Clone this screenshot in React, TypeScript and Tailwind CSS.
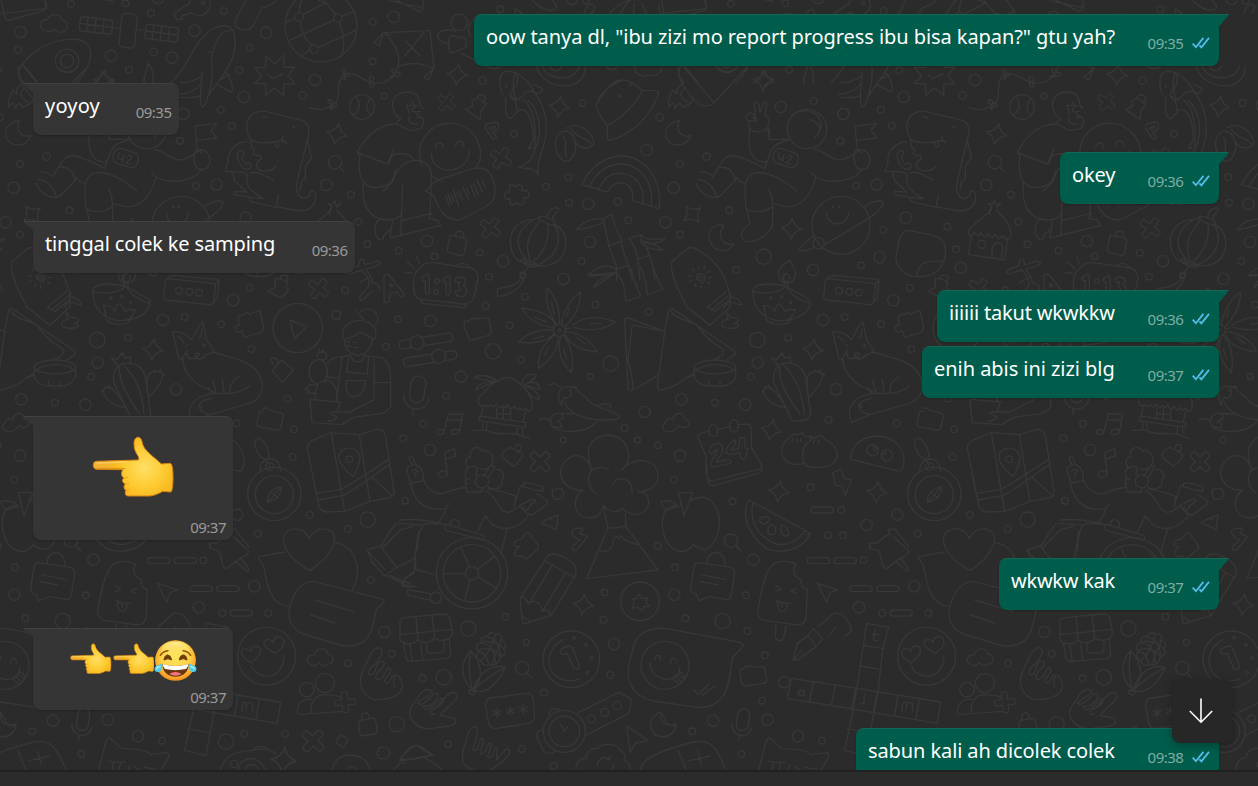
import React from 'react';

type Dot = [number, number, number];

function Dots({ items }: { items: Dot[] }) {
  return (
    <>
      {items.map(([x, y, r], i) => (
        <circle key={i} cx={x} cy={y} r={r} />
      ))}
    </>
  );
}

/** Doodle coordinates are in thirds of a pixel, relative to the block's corner. */
function Block({ x, y, children }: { x: number; y: number; children: React.ReactNode }) {
  return <g transform={`translate(${x} ${y}) scale(0.33333)`}>{children}</g>;
}

function Sparkle({ x, y, r = 31, a = 8 }: { x: number; y: number; r?: number; a?: number }) {
  return (
    <path
      transform={`translate(${x} ${y}) rotate(${a}) scale(${r / 31})`}
      d="M0-32Q5-9 31 0Q7 5 0 32Q-7 8-31 0Q-7-6 0-32Z"
    />
  );
}

function Cross({ x, y, a = 45, s = 1 }: { x: number; y: number; a?: number; s?: number }) {
  return (
    <path
      transform={`translate(${x} ${y}) rotate(${a}) scale(${s})`}
      d="M-10-31Q-10-36-4-36H4Q10-36 10-31V-10H31Q36-10 36-4V4Q36 10 31 10H10V31Q10 36 4 36H-4Q-10 36-10 31V10H-31Q-36 10-36 4V-4Q-36-10-31-10H-10Z"
    />
  );
}

function Doodles() {
  return (
    <>
      <Block x={0} y={0}>
        <Dots items={[[213, 11, 10], [376, 10, 10], [453, 39, 10], [62, 96, 17], [54, 149, 10], [333, 167, 17], [461, 156, 11], [516, 173, 17], [387, 209, 10], [584, 92, 17], [671, 33, 10], [798, 98, 17], [749, 143, 10], [718, 211, 10], [945, 240, 17], [908, 286, 11], [731, 291, 17], [662, 329, 10], [550, 342, 17], [695, 378, 10], [540, 422, 10], [140, 470, 11], [60, 492, 10], [41, 563, 17], [588, 557, 10], [650, 554, 17], [208, 631, 10], [16, 667, 17], [60, 704, 10], [1118, 66, 10], [1181, 51, 17], [1118, 184, 10], [1153, 288, 9], [979, 555, 17], [1053, 584, 10], [737, 653, 17], [1075, 665, 10], [1102, 733, 10], [1196, 752, 10], [475, -6, 17]]} />
        <path d="M3-5L14 52Q18 63 30 60L130 32Q142 27 139 18L130-8M290-6L340 4" />
        <path d="M130 88C114 80 122 56 142 60C148 40 180 36 186 60C206 64 206 92 190 94C180 100 172 96 166 88C158 96 140 96 130 88Z" />
        <g transform="translate(288 76) rotate(7)">
          <rect x="-49" y="-21" width="98" height="43" rx="8" />
          <path d="M-49 0H49M-26-21V22M-2-21V22M22-21V22" />
        </g>
        <path d="M337 82L362 86M412 89L436 92" />
        <rect x="-24" y="-51" width="47" height="102" rx="12" transform="translate(385 92) rotate(6)" />
        <g transform="translate(485 99) rotate(7)">
          <rect x="-49" y="-21" width="98" height="43" rx="8" />
          <path d="M-49 0H49M-26-21V22M-2-21V22M22-21V22" />
        </g>
        <path d="M68 192C100 150 150 122 210 118C250 116 272 130 272 164C270 200 250 226 228 250M68 192C50 214 52 226 72 248M68 192L112 246" />
        <circle cx="201" cy="183" r="35" /><circle cx="201" cy="183" r="20" />
        <path d="M70 250C50 260 48 272 52 282C42 278 36 268 38 270C26 292 22 310 28 322C34 306 46 304 44 326C56 306 66 306 66 322C80 320 98 308 101 294M75 262C56 280 60 296 84 306" />
        <path d="M306 212Q312 232 342 238Q318 246 312 262M306 212Q306 238 280 250M433 250C426 226 444 222 442 190C462 206 462 230 458 250" />
        <path d="M522 46L526 38L568 10L572-4M522 46L532 60L548 56L546 48L572 38L590 46L606 48L628 30Q634 14 626-4" />
        <circle cx="609" cy="9" r="5" />
        <path d="M740-4L708 58C700 78 710 82 720 86C744 94 754 86 760 76L786 24C808 18 820 12 832-2" />
        <path d="M513 248C562 206 578 140 610 110C640 78 680 66 698 90C712 120 706 160 690 190C672 230 640 262 623 292C616 320 606 330 602 310C600 270 606 236 606 216M634 176C644 130 660 86 692 92M634 176C640 220 636 258 623 292M536 282C564 282 588 270 604 250M538 292C560 294 586 292 602 288M678 220C694 236 702 268 694 276C682 270 660 260 650 252M667 236L690 222M540 248C560 250 590 240 606 228" />
        <circle cx="630" cy="156" r="2" />
        <path d="M764 203L797 203L798 168L824 192L850 166L853 202L885 201L864 226L885 252L852 252L851 286L823 264L798 286L797 252L764 250L785 228ZM806 225L818 236L848 222" />
        <circle cx="963" cy="78" r="108" /><circle cx="897" cy="50" r="13" /><circle cx="1014" cy="54" r="13" /><circle cx="942" cy="147" r="13" />
        <path d="M857 68L884 54M909 43L980 8M900 63C904 96 920 124 936 136M898 37C898 20 902 4 910-6M867 122L1002 60M1026 48L1062 34M955 143L1069 90M930 150L904 168M1018 67C1034 110 1036 144 1022 172M1006 42L966-6M940-6L972 8M990-6L998-2" />
        <path d="M1150 98L1122 128L1138 138ZM1150 98L1174 106M1150 98L1290 92L1302 204M1150 98C1180 120 1204 160 1194 200M1194 200C1230 184 1270 190 1300 206M1214 168L1272 98M1216 122L1260 168M1302 204L1272 232L1286 240L1300 206M1194 200L1186 220" />
        <path d="M928 323C960 336 990 324 1006 310C1024 290 1006 246 1030 226C1060 210 1084 236 1112 248C1150 254 1168 242 1184 222" />
        <path d="M1034 224q-14-16-4-16q12 4 6 14q18-6 14 4q-8 8-16 0q4 16-2 12zM1112 246q-10-14 2-16q14 2 2 16q12 16 0 16q-12-4-4-16zM1184 222q-16-12-4-16q12 4 6 12q18-4 14 6q-6 8-16 2q-4 12-14 4zM994 314q-16-8-8-14q14 0 12 10q14-2 12 8q-6 6-14 0q2 12-4 10z" />
        <circle cx="1086" cy="321" r="37" /><path d="M1068 290C1082 310 1080 330 1060 346M1112 296C1098 310 1096 330 1114 348" />
        <path d="M58 362C28 366 12 386 18 410C28 440 76 448 94 406C68 416 44 394 58 362Z" />
        <Sparkle x={1010} y={402} a={12} />
        <circle cx="1005" cy="487" r="20" /><path d="M1018 500L1032 515" />
        <path d="M585 378L650 370L633 392L650 414L590 422M585 378L592 450M592 450C580 456 580 474 584 486C584 506 606 514 620 504C634 490 632 470 620 456C608 446 598 450 592 450L606 458" />
        <path d="M1186 372C1130 372 1090 420 1072 458L1162 492L1168 482M1072 458L1080 466M1190 372L1230 392L1262 386C1276 364 1272 350 1254 348L1250 340M1186 372L1202 356C1170 340 1170 290 1200 280C1230 270 1256 280 1258 306C1262 316 1260 326 1270 324M1150 574L1180 542C1186 514 1206 484 1244 482C1276 478 1296 500 1294 530L1290 640M1168 492C1170 470 1180 458 1200 462C1216 458 1236 468 1244 482M1182 446L1162 492M1080 466C1070 530 1090 564 1130 562C1166 562 1184 540 1186 512M1090 550C1086 600 1096 656 1160 660C1180 660 1194 654 1202 646M1208 556L1202 706M1138 658C1124 670 1120 700 1134 714C1142 726 1152 718 1150 708C1160 696 1172 690 1174 684M1178 660L1170 714M1170 714L1322 676L1310 660L1286 656L1294 640L1204 662" />
        <path d="M1254 316C1240 320 1232 330 1240 336L1260 334M1228 340L1220 316L1244 316L1236 304M1228 350C1222 366 1234 374 1254 372M1250 354L1262 352" />
      </Block>

      <Block x={40} y={60}>
        <Dots items={[[782, 623, 17], [768, 568, 10], [742, 500, 10], [550, 510, 10], [538, 592, 17], [483, 616, 10], [339, 630, 17], [109, 629, 10], [191, 590, 23], [88, 451, 10], [341, 123, 10], [430, 162, 17], [421, 243, 10], [629, 683, 10], [242, 141, 17]]} />
        <circle cx="321" cy="207" r="59" />
        <path d="M272 172C290 148 320 150 340 158C370 176 370 210 344 232M330 178C346 184 358 196 359 208M208 204V238H268L232 252C212 262 208 290 194 326L166 310C130 296 110 284 90 288C66 292 60 320 38 350C30 340 14 334 4 336M149 210C142 260 150 306 194 306M194 306L202 302M202 208L208 226M344 268C370 270 390 300 420 300C446 298 462 280 476 274M334 338C360 370 420 372 470 346L484 328M348 352C334 400 310 440 262 440C244 440 230 432 217 430M290 394C250 356 190 326 154 342C130 360 134 400 138 440L150 490C136 500 122 512 124 530C130 550 160 550 190 530C216 506 218 500 218 486V438C216 410 214 396 204 386M138 448C160 458 196 458 216 440M60 322C90 320 104 340 104 364L110 352L118 364L134 370M104 362L60 408C30 420 0 400-12 370M-8 358C10 358 40 372 50 412" />
        <rect x="-38" y="-23" width="76" height="46" rx="18" transform="translate(257 294) rotate(18)" />
        <path d="M238 278L234 294L250 300M252 284L246 306M260 294Q270 280 276 290Q274 300 256 308L270 312" />
        <path d="M150 208C138 190 152 178 164 184C170 172 160 166 166 158L162 132Q168 120 176 130L180 156L190 130C196 120 204 126 198 140L196 166C208 170 210 190 202 204C190 218 160 218 150 208ZM164 186C170 184 172 176 166 172M150 182C134 184 136 166 146 160C160 156 166 166 160 176" />
        <circle cx="423" cy="496" r="87" />
        <path d="M380 458C378 500 440 506 446 458M492 440C520 424 544 418 550 428C546 452 518 470 374 554M340 528C310 550 292 568 298 572C316 574 330 568 342 562" />
        <circle cx="356" cy="550" r="17" /><circle cx="400" cy="442" r="2" /><circle cx="417" cy="440" r="2" />
        <Sparkle x={275} y={506} a={4} />
        <path d="M632 238C618 214 614 190 632 168C650 152 670 150 690 158L776 178C800 182 810 196 806 222C796 270 778 330 770 372C766 394 776 412 790 416C804 414 812 404 812 392C824 388 830 404 826 420C820 450 790 456 760 450L708 440M632 238C650 254 700 250 728 240L738 250M728 226L726 244L738 244M704 250C708 268 716 264 716 248M670 172Q678 168 682 174M632 240L634 260L644 268L640 282L650 288L660 284L664 296L654 304C640 322 660 336 680 332C696 332 704 324 708 318M620 246C590 244 562 272 564 304L556 334L604 336C620 338 626 346 620 358C618 380 640 400 670 416L628 412L632 424L708 442L716 404M578 340L584 362L620 396L584 394C574 408 600 406 630 412M630 340C650 330 670 346 700 360M802 240L814 292L806 308L802 306L796 322V356L784 366L780 390" />
        <circle cx="761" cy="202" r="2" />
        <path d="M600 272C580 278 600 326 620 328C640 326 634 312 624 308L616 314C608 304 604 296 606 288L612 284C612 276 606 270 600 272Z" />
        <path d="M876 442L864 430L876 434L884 422L888 436L902 430L890 444M876 442C866 450 864 460 872 464M874 450L808 506L806 522C812 530 820 526 822 516C828 528 840 530 842 518C850 532 860 534 862 520C872 534 882 536 884 522C894 538 904 540 906 526C916 540 932 542 934 522C930 490 912 470 890 452M814 526L806 584L914 600L922 540M876 594V568C880 542 906 544 908 566L904 598" />
        <circle cx="845" cy="553" r="12" />
        <path d="M630 512L700 526C730 534 738 556 736 582C732 626 700 650 660 650C610 650 586 620 588 590L598 540C606 512 618 510 630 512ZM650 650C656 610 670 600 726 604" />
        <path d="M164 682C190 664 250 674 270 686L330 720C336 750 300 780 244 782C190 782 160 740 160 706C156 686 162 680 164 682ZM162 694C200 706 250 694 258 676M262 686C280 710 310 728 330 728M196 776C210 796 260 800 272 780M198 768L190 736C208 736 220 740 224 754C226 740 236 730 240 732C250 740 252 748 254 754C262 748 276 748 286 750C280 766 270 778 260 780" />
        <circle cx="258" cy="653" r="12" />
        <path d="M244 665C230 650 230 620 270 602C278 620 292 634 284 654C280 666 260 674 244 665M258 640C250 650 246 662 256 666M252 670V682M264 670V682" />
        <circle cx="213" cy="714" r="3" /><circle cx="245" cy="709" r="3" /><circle cx="272" cy="727" r="3" />
        <path d="M382 656L520 670Q528 672 526 682L520 728Q516 736 508 734L380 720Q370 718 371 708L376 664Q378 656 382 656ZM380 656L398 646L530 658Q538 660 537 668L531 716L514 734M526 672L537 660" />
        <circle cx="417" cy="692" r="10" /><circle cx="448" cy="695" r="10" /><circle cx="477" cy="698" r="10" />
        <path d="M722 656L744 668L738 682L746 690L724 714L684 694L706 682L706 656ZM720 658C716 644 740 640 744 652C744 664 738 668 736 668" />
        <Cross x={836} y={686} a={36} s={0.9} />
        <path d="M920 638Q920 630 928 628L956 618L960 600Q966 594 972 602L974 614L1010 604Q1020 602 1022 610L1004 620L978 628L992 650L998 668Q1018 672 1020 690M920 638Q926 644 932 640L966 630L984 654L958 668M1032 726V648Q1040 636 1050 648L1092 702Q1090 714 1082 710L1070 694L1050 700L1048 722Q1040 730 1032 726ZM1050 670V680L1060 678ZM984 654L988 676L958 712Q960 724 970 718L998 692" />
        <path d="M1130 590L1139 610M1102 606L1122 624M1096 638L1116 639" />
      </Block>

      <Block x={400} y={0}>
        <Dots items={[[301, 28, 10], [178, 67, 25], [248, 242, 11], [548, 309, 10], [779, 352, 11], [342, 402, 10], [740, 450, 17], [505, 532, 10], [437, 560, 10], [507, 608, 10], [565, 612, 17], [653, 605, 11], [685, 661, 10], [81, 723, 17], [104, 769, 10], [239, 758, 10], [309, 784, 17], [570, 726, 17], [544, 783, 10], [515, -3, 17], [558, 2, 10], [635, 192, 17]]} />
        <path d="M-20-4L58 34C72 32 70 14 68-4M-30 2L64 22M396-4C410 20 440 36 466 28C476 18 460 4 450-4M346 42V26L366 40M552 42C556 18 574 6 582 16C586 28 580 36 572 42M628 42C660 2 690-4 720 0M780 42L776 14M786 40L916 26Q922 20 920 12L912-4M660 42L690-4M700 42L704 8M724 8L740 42" />
        <path d="M212 110C190 80 226 40 250 60M166 94C140 86 116 90 112 110C116 126 136 130 148 132M148 132C136 110 166 98 174 116C186 104 204 114 198 134L200 140L156 160C146 150 144 140 148 132M184 160L232 184M262 200Q280 210 300 202" />
        <Sparkle x={172} y={224} a={6} /><Sparkle x={478} y={320} a={8} />
        <Cross x={139} y={306} a={37} s={0.78} /><Cross x={303} y={474} a={33} s={0.92} /><Cross x={271} y={684} a={36} s={0.92} />
        <path d="M232 294L260 310L244 330L240 358L196 328L218 318L216 302ZM232 294C230 284 250 278 256 294C256 304 252 308 248 310" />
        <path d="M308 284C294 250 296 216 322 214C356 212 390 250 402 274C436 320 450 380 430 440C420 470 412 490 414 522C400 500 372 506 356 502C390 490 404 470 404 440M350 330C350 310 344 296 336 290M318 292C314 320 318 356 330 356C342 352 350 336 356 330C390 320 400 380 400 420C380 450 384 450 396 442M350 226C366 260 310 280 340 298C370 306 360 270 400 274M346 220C336 240 338 280 350 300M402 254C420 260 432 270 426 272C416 284 408 280 400 276M370 300C400 320 410 380 404 440M384 302C420 330 430 400 404 450" />
        <circle cx="318" cy="259" r="2" />
        <path d="M410 200C420 240 460 262 510 256C540 250 556 226 556 200M428 200C440 240 520 250 538 200M450 200C458 216 476 216 484 200M706 200C700 224 730 234 744 224C760 232 780 224 786 204" />
        <path d="M592 310C600 290 630 254 652 242C676 234 700 246 727 272L770 272Q778 276 774 286C750 350 700 400 630 422Q622 420 622 408V376C604 356 584 320 590 310ZM592 310C600 270 650 250 666 240M622 376C660 360 710 310 727 272" />
        <circle cx="658" cy="287" r="4" /><circle cx="692" cy="252" r="4" />
        <path d="M835 200C832 240 860 280 900 314C920 322 936 316 944 306L1042 200M850 200L942 308M950 200C970 220 1000 220 1012 200" />
        <path d="M258 380Q254 374 262 372L284 366C300 366 300 388 284 396L278 398L290 410Q286 420 276 414L256 384M268 384L284 378C290 384 282 390 276 390Z" />
        <path d="M500 384C522 370 570 376 582 428C576 450 536 450 526 424M494 394C520 390 530 430 526 450C516 490 490 496 472 460C462 430 466 396 494 394ZM490 410C506 430 488 450 500 470M514 388C530 416 560 410 578 436" />
        <path d="M66 498C40 420 96 366 156 370C216 374 250 430 240 480C238 490 234 494 228 500M94 460C94 530 206 526 208 452M107 444C108 424 130 424 130 444M167 438C168 418 190 418 191 438M94 528L128 546" />
        <path d="M112 540L76 572L100 586C120 640 140 660 180 660L260 618C290 600 290 570 278 536C264 500 240 500 210 508Z" />
        <path d="M137 586L148 618M143 580L156 612M154 584L162 604M160 570L176 618M170 576L178 596M178 574L188 600M190 562L206 602M200 564L208 584M212 556L226 592M220 550L236 586M232 542L248 576M246 540L256 562" />
        <path d="M330 554Q340 552 344 560Q356 550 366 558Q370 566 364 572Q388 570 388 582Q384 598 372 592Q376 606 368 614Q358 618 350 606Q342 618 330 612L330 596Q316 602 314 590Q312 574 328 576Z" />
        <path d="M545 554C570 500 620 466 670 468C740 474 786 540 778 626L698 602M545 554L622 576C640 540 690 536 698 584V602M568 560C590 510 630 490 670 492C724 496 762 550 754 618M596 568C612 530 640 518 666 520C706 524 736 560 728 610" />
        <path d="M150 708Q150 704 156 706L192 714Q202 718 200 726L192 762Q188 768 180 766L150 758Q140 756 142 748ZM168 706C164 690 190 690 191 704L190 714" />
        <path d="M420 654Q410 656 400 658C350 660 326 700 332 734C336 770 350 784 370 786C420 806 460 798 480 778C510 740 500 690 462 672M418 650Q430 646 462 662Q468 670 460 676Q440 672 420 660ZM444 654C440 630 466 618 476 626C476 640 458 640 458 656M400 660C344 690 344 740 378 776M418 664C380 710 376 740 390 782M444 672C450 720 430 760 400 784M464 676C490 720 470 770 414 794M362 780Q366 772 380 782L410 792Q412 800 406 802Q380 802 362 780ZM386 800L368 822" />
        <circle cx="368" cy="827" r="8" />
        <path d="M530 690C550 664 570 656 612 656L636 642C640 680 660 706 666 724C660 750 690 790 696 840M530 690C560 686 600 674 612 666L606 656M612 666L626 734L650 800V840M626 738L664 724M650 808L686 796M686 716L724 704C730 720 760 720 794 716C780 730 750 734 730 728M686 716C700 730 712 750 716 800L720 840M724 706C712 730 740 750 786 750C770 730 740 730 726 720M716 776L748 766M740 740C744 760 760 780 764 840M564 826C590 800 620 790 648 806M568 828L640 824" />
        <Sparkle x={877} y={643} r={31} a={52} /><Sparkle x={1092} y={242} a={6} />
        <path d="M960 674C930 678 922 700 930 722C940 760 990 760 1000 732C970 738 946 710 972 676Z" />
        <path d="M822 780L862 746Q870 740 882 744C920 760 950 790 972 830L990 880M822 780C806 790 818 820 826 850L860 920L930 976M930 976L990 920L990 880" />
        <path d="M898 834C896 828 906 826 908 834C908 844 892 844 890 834C888 820 908 816 914 828C918 840 910 850 900 850" />
        <path d="M866 826L874 829M876 806L882 812M895 798L896 806M914 800L912 808M930 812L922 818M934 832H926M930 850L922 846M902 866V858M884 860L888 852M868 846L876 842" />
      </Block>

      <Block x={0} y={270}>
        <Dots items={[[64, 388, 17], [165, 398, 10], [256, 404, 17], [273, 320, 10], [293, 278, 17], [292, 210, 23], [385, 203, 10], [489, 150, 17], [554, 141, 10], [663, 163, 10], [700, 91, 17], [754, 237, 10], [528, 358, 17], [1035, 61, 10], [1194, 148, 10], [1157, 230, 10], [862, 386, 10], [710, 460, 10], [882, 478, 10], [878, 561, 10], [1210, 505, 10], [60, 557, 17], [42, 629, 10], [1103, 749, 23], [1043, 777, 10], [773, 791, 10], [712, 734, 17], [929, 735, 10], [1215, 692, 10], [620, 765, 17], [504, 796, 10], [549, 796, 10], [506, 449, 10], [544, 720, 10], [452, 652, 10], [218, 694, 10]]} />
        <path d="M142 112L200 64M154 120L212 72M142 112L166 124L210 86M210 82C226 80 240 90 244 104C230 104 214 96 206 90M190 114L206 96" />
        <path d="M200 126Q206 138 210 142Q236 142 236 154Q230 160 222 160C240 164 240 170 222 174C200 178 180 170 186 160C184 148 202 150 204 148Q196 136 200 126Z" />
        <Sparkle x={459} y={239} a={6} />
        <path d="M714 140L744 128Q750 140 758 128L780 122L790 170Q790 184 780 188L734 202L726 182Q712 192 706 180Q702 166 718 166Z" />
        <circle cx="893" cy="174" r="74" /><path d="M870 150L921 169L883 206Z" />
        <rect x="-12" y="-12" width="24" height="24" rx="5" transform="translate(1009 135) rotate(10)" />
        <path d="M536 264C530 230 520 200 518 184C540 184 560 190 574 208C584 200 590 170 608 156C616 180 616 200 620 212C636 226 636 236 642 246C630 244 632 256 620 252C608 270 592 268 586 264C566 270 562 264 562 250C550 256 548 260 550 270L536 264M560 240L556 252M556 230L564 224M608 222L616 224L612 232M534 200C540 204 552 214 552 220M598 204C606 196 606 184 606 176M584 252Q596 246 598 252Q596 262 586 260ZM640 246C700 266 740 270 768 300C800 340 790 384 748 400L630 434C600 426 590 414 606 394C620 386 626 390 634 384M548 272C552 300 560 310 570 320C590 346 610 352 650 370H690C714 370 740 356 748 348M690 370C688 340 704 326 718 320M638 330L648 368M666 326L672 368M624 352L634 368M650 370C600 370 560 400 570 440L574 458L630 434M606 410Q590 412 600 400" />
        <path d="M388 434L342 340C336 310 344 290 368 280C410 276 430 290 438 330L452 434M358 290C356 340 390 390 420 434M368 282C410 320 430 380 432 434M352 284L334 264L352 268L366 248L374 264L390 260L392 280M378 412C350 412 316 390 312 370C308 350 326 346 344 364L372 400M446 382C440 350 436 320 450 310C470 298 490 306 488 320C480 350 460 366 446 382M318 348L306 366M324 346L334 354M462 300L474 306L484 298M488 310L494 316M388 434C390 450 400 456 410 454C440 450 448 446 452 434" />
        <path d="M820 282C808 272 812 262 824 264C836 270 836 276 834 278M818 300L842 274Q848 270 852 276L880 300L848 336L818 306Z" />
        <path d="M1030 208C1020 170 1050 150 1080 152C1120 154 1136 180 1124 208C1110 202 1090 190 1078 186C1060 206 1044 204 1030 208ZM1034 208C1030 240 1060 256 1076 256C1100 254 1112 230 1118 208M1082 126C1090 112 1130 110 1134 148C1134 160 1128 168 1120 168M1068 122L1090 148M1052 254Q1052 270 1072 276Q1092 274 1092 254M1030 260L1050 254M1096 258L1140 262C1160 266 1172 290 1172 330V410C1160 430 1140 434 1120 434L1060 442L1024 464L936 458L930 388L1022 396L1010 426M1026 262L1010 390M1046 262L1040 306L1102 312L1106 264M1122 266V390L1050 426L996 426C984 430 1000 436 1010 440C1010 450 996 452 984 454M1040 332Q1066 332 1096 332C1096 390 1040 396 1038 350ZM1122 338H1172M1030 260C1000 258 990 270 984 280M978 320L1012 324M946 386C946 350 952 332 980 332C1004 334 1012 360 1012 392M950 342C920 330 920 280 950 270C980 260 990 310 974 334M952 262C950 240 976 240 980 256C980 266 972 272 966 272M946 346C926 340 918 352 922 362C930 374 942 374 946 366M956 240L962 250M968 238V248M914 356L924 360M920 372L928 366M1042 228L1052 230M1062 232L1074 232M1060 218L1068 216M1040 214L1048 216" />
        <path d="M790 416Q796 410 804 418L844 430Q852 432 850 440L842 474Q838 484 828 480L776 470Q768 466 770 460L778 430Q780 420 790 424" />
        <path d="M764 520C762 500 780 502 790 514C806 534 812 560 800 570C780 566 766 540 764 520ZM794 566L810 590" />
        <circle cx="809" cy="590" r="12" /><path d="M780 602C776 560 840 550 842 604" />
        <circle cx="823" cy="672" r="80" /><circle cx="823" cy="674" r="57" />
        <path d="M802 698C800 670 820 656 844 650C846 676 826 690 802 698M802 698L846 648M812 666L834 684" />
        <path d="M922 536Q922 520 940 510L994 488L1078 494L1130 478Q1150 476 1156 496L1182 664Q1184 682 1164 684L1110 694L1034 724L980 726Q960 724 956 706ZM994 488L1034 724M1078 494L1110 694M950 670L1022 658C1060 640 1100 610 1166 568M954 690L1030 676C1080 650 1120 616 1168 584M1116 622L1178 678" />
        <path d="M1060 620C1030 600 1016 570 1016 560C1020 526 1076 524 1080 564C1078 590 1066 606 1060 620Z" /><circle cx="1048" cy="568" r="10" />
        <path d="M20 484C6 480 4 466 14 460C18 442 34 446 38 448C46 424 72 426 72 446C90 450 94 470 78 470C66 480 60 466 56 466C48 480 34 488 20 484Z" />
        <path d="M56 668H98L72 738ZM56 712C46 704 24 704 12 730C-4 780 20 850 75 844C90 836 96 830 100 824C130 846 150 846 170 800C190 740 170 690 130 682C110 680 100 688 92 692M56 714C50 700 40 690 2 694C10 720 20 726 46 710" />
        <path d="M630 836C624 826 632 816 648 820L690 790L684 780L704 776L746 830" />
        <circle cx="213" cy="812" r="20" /><path d="M226 826L242 842" />
        <rect x="453" y="711" width="67" height="18" rx="9" />
      </Block>

      <Block x={160} y={270}>
        <path d="M92 560C100 520 130 498 180 498C230 504 254 540 252 580C250 600 240 606 230 602L100 570Q88 566 92 560Z" />
        <circle cx="158" cy="541" r="17" /><circle cx="201" cy="556" r="17" /><circle cx="165" cy="535" r="5" /><circle cx="193" cy="548" r="5" />
        <path d="M38 608L64 598L72 624L94 630L76 676L66 648L46 646Z" />
        <Sparkle x={171} y={666} a={6} />
      </Block>

      <Block x={400} y={270}>
        <Dots items={[[490, 27, 17], [375, 80, 10], [257, 107, 10], [267, 20, 10], [91, 153, 17], [329, 166, 10], [586, 104, 10], [746, 125, 10], [279, 244, 23], [363, 269, 10], [632, 281, 23], [183, 320, 17], [139, 377, 10], [571, 320, 9], [734, 426, 17], [674, 473, 10], [712, 510, 9], [773, 526, 10], [490, 510, 9], [69, 461, 10], [90, 540, 17], [15, 692, 10]]} />
        <path d="M60-4Q40 8 40 40L42 66Q46 86 64 88L190 102Q216 102 224 76L234 24Q232 0 212-6L100-22Q70-24 60-4ZM64 88V96Q64 100 72 101L192 113Q200 112 200 102M172-8C170-24 206-22 206-8" />
        <path d="M66 22L84 12Q88 14 88 24V66Q84 78 76 70V32Q64 34 66 22ZM130 26L146 16Q152 18 150 30V68Q146 80 138 72V36Q128 38 130 26ZM164 30C170 16 198 20 196 36L190 46C206 56 200 82 182 80C164 76 162 64 168 62C180 64 184 60 178 52C170 48 176 42 180 36C176 34 170 42 164 30Z" />
        <circle cx="111" cy="34" r="7" /><circle cx="108" cy="66" r="7" />
        <path d="M364 22C350 50 320 52 292 56V80C330 76 360 60 374 22" /><circle cx="369" cy="14" r="8" />
        <path d="M564 16C590 14 620 10 646 8L582 52C590 30 610 20 650 8M646 0L670 40L678 94L722 80C706 40 696 20 694-4M722-10C736 20 740 50 742 74L788 58C776 36 766 10 760-8" />
        <circle cx="478" cy="181" r="18" /><circle cx="478" cy="181" r="4" />
        <path d="M470 164C440 120 436 90 442 54C476 90 480 130 478 162M484 164C490 120 510 90 541 66C542 110 524 140 496 170M462 172C420 170 386 150 366 114C410 120 450 130 468 166M460 180C420 176 380 190 356 216C400 224 440 214 462 192M466 194C430 220 412 250 416 296C450 270 476 240 474 200M482 200C470 240 484 280 514 308C522 270 514 220 490 196M494 188C510 230 550 240 590 246C574 210 540 190 496 184M516 166C560 134 600 140 648 156C610 182 560 184 520 172M454 96L464 136M508 114L500 140M404 142L440 156M400 206L432 198M434 256L446 232M490 236L500 266M530 202L554 220M570 162L604 160M498 176L510 174" />
        <path d="M196 152L206 154Q212 144 222 146L232 144Q236 150 240 146L258 144Q266 142 268 150L274 182Q274 192 266 196L216 210Q208 212 206 204L194 174Q190 160 196 152Z" />
        <rect x="-81" y="-13" width="162" height="26" rx="12" transform="translate(78 213) rotate(-9)" /><rect x="-81" y="-13" width="162" height="26" rx="12" transform="translate(90 266) rotate(-9)" />
        <g fill="#2b2b2b"><circle cx="51" cy="218" r="21" /><circle cx="116" cy="259" r="21" /></g>
        <rect x="-22" y="-40" width="44" height="80" rx="22" transform="translate(53 358) rotate(9)" /><path d="M11 372C12 430 84 430 86 384M40 418L38 434" />
        <path d="M674 150Q674 142 684 144L794 184L806 120Q812 112 820 118L1000 240Q1010 250 1004 254L980 270M674 150L684 354Q688 366 700 360L774 316M794 184L772 350Q776 362 786 360L830 344C850 330 866 316 884 316M696 168C690 220 688 240 684 270L694 310L700 358M700 166L796 184M812 124C826 146 860 150 890 164C910 200 940 220 966 236C980 250 960 262 944 268M856 326L884 308" />
        <ellipse cx="945" cy="291" rx="62" ry="21" /><path d="M883 291V322C890 340 910 348 930 348H970C990 346 1006 330 1007 318V291M888 302C910 280 980 276 1002 302M926 334V348M960 334V348" />
        <path d="M238 380C256 366 270 340 296 332C316 318 336 322 350 334C376 350 390 376 396 392V416Q386 428 380 420L374 414Q368 430 360 412Q350 430 344 408Q332 426 324 404Q314 420 306 406Q300 422 290 402Q280 418 272 404Q262 414 254 406Q238 412 234 394ZM250 408L244 440M376 426L370 456M240 438L378 458L376 472L238 452ZM248 456V476M260 458V478M352 470V490M368 472V492M216 482C240 480 254 476 270 486C300 496 330 488 350 492L390 506M290 414V444M310 416V448M332 420V446M290 432H332M290 332C270 316 240 312 222 322C240 330 260 330 284 334C260 336 230 340 228 360C250 350 270 340 284 336M366 346C366 320 386 308 408 314C406 330 390 334 374 344C400 330 420 340 420 358C406 356 386 346 376 346C400 360 418 370 418 388C396 386 380 364 374 350" />
        <path d="M446 346C460 336 470 344 480 350M484 406C470 380 474 350 500 350H530C520 364 540 360 570 396C600 420 640 420 658 438C660 450 640 450 600 450C550 446 506 430 494 396M484 404C488 390 490 380 500 384C516 380 520 360 506 362C520 350 522 354 530 350M580 404C600 412 600 398 620 402C636 402 634 410 630 414M418 452C430 440 440 448 452 452M488 430C460 426 450 440 452 460C460 490 520 486 550 480C570 474 590 460 590 452M462 476C460 466 470 472 480 474C490 466 484 454 470 456C480 446 500 450 484 430L520 432" />
        <path d="M131 490C134 476 116 476 110 484C106 494 128 498 131 486L146 432L188 432L178 486C176 494 156 496 153 488C154 476 172 474 178 484M142 450H184M142 614C140 600 120 600 114 610C112 624 134 628 142 612L134 552Q134 546 164 536L166 558L136 568" />
        <path d="M306 552Q312 540 330 532L342 538Q370 548 368 560L342 590L306 562ZM344 534C346 520 362 520 364 530C364 546 354 548 352 546" />
        <Cross x={420} y={575} a={45} s={0.98} /><Sparkle x={1114} y={480} a={12} /><Sparkle x={1137} y={664} a={8} />
        <path d="M32 634L22 610C16 590 30 586 38 586C20 560 30 554 38 562L46 584C60 590 70 600 70 620V632L32 640M36 602C42 594 56 600 54 606C44 604 40 612 48 620M28 640L72 632C80 660 110 674 130 670C160 660 180 650 200 654M32 642C40 680 60 716 110 718C130 718 140 716 138 714L147 700M138 716C130 740 120 750 112 762M200 654V666H244L248 654M200 654C192 640 196 630 200 624C190 620 200 610 196 606C200 590 220 586 230 592C236 600 226 606 228 614L236 616M206 596C186 570 210 556 212 560C206 530 240 526 246 542C270 540 290 560 272 588C262 600 250 600 240 596M250 620L270 590Q276 584 284 590L266 622M288 600C310 596 318 620 304 630C316 650 284 664 266 652M264 656C300 664 330 670 348 680L342 710M256 662C280 670 290 700 306 720C330 740 350 710 360 708L384 734M384 740C350 780 310 782 280 766L256 738L232 786M342 710L360 650L372 644M372 638Q380 636 430 650L428 664Q410 662 370 650ZM360 706L384 694C400 682 410 690 406 696C396 700 390 706 386 712C380 730 360 720 374 712M410 672L440 690Q444 700 440 704L396 736L384 730" />
        <circle cx="246" cy="634" r="20" />
        <path d="M200 626L210 628M198 640H206M322 778L302 850" />
        <path d="M458 658L484 655L492 672L483 687L464 689L456 672ZM424 756L474 734L468 780L456 772L424 760M448 744L458 748" />
        <path d="M574 596C560 546 500 540 482 600C480 630 500 664 550 660C520 672 510 740 570 744C600 744 604 724 610 706C620 720 650 736 666 714C700 750 746 730 746 694C740 660 720 666 714 664C750 666 776 644 774 614C766 560 700 560 664 600C680 590 690 566 684 546C676 480 576 480 566 540C564 560 568 580 574 596M588 670C560 650 556 600 590 594C606 590 620 594 626 598M638 642C650 616 700 620 696 670M610 706L624 774L596 840L560 926L774 900L678 770L676 730M624 774Q650 776 678 768M598 840C610 850 636 846 640 810Q650 790 656 806L662 796C670 816 700 820 714 824" />
        <path d="M894 500Q892 494 906 488L928 484M956 478L990 470M1016 464L1044 462Q1054 466 1054 480V532L1084 584Q1088 600 1080 608L944 646Q930 650 926 640L918 600V560L894 500M918 560L922 622Q930 636 940 632L1084 596" />
        <rect x="928" y="464" width="24" height="36" rx="12" /><rect x="990" y="450" width="24" height="36" rx="12" />
        <path d="M928 544C930 520 960 512 968 532C972 556 950 566 948 576L986 568Q996 572 990 580L944 590Q932 592 932 580C934 566 956 550 952 540C946 536 942 550 934 552ZM978 548C974 540 990 516 1004 510Q1010 516 1006 522L994 542L1016 536L1020 504Q1030 500 1034 508L1036 534Q1048 536 1042 544L1036 564Q1028 572 1022 562L1020 548L990 554Z" />
        <path d="M1170 502L1180 492L1192 496L1206 488L1214 498L1230 502M1170 502C1130 530 1140 580 1190 584C1210 582 1210 580 1212 578M1212 578C1200 540 1216 520 1236 508L1230 498L1246 504L1256 496L1270 502L1280 512C1324 530 1326 590 1260 592C1230 594 1216 590 1212 578M1176 514L1180 506M1190 516V506M1202 514V506M1240 520L1244 512M1256 520V512" />
        <path d="M1046 690L1232 790C1200 850 1130 850 1100 836C1050 800 1020 740 1046 690ZM1060 698C1046 740 1070 790 1100 806C1140 840 1190 820 1216 782M1232 790L1214 794" />
        <path d="M1078 752C1080 740 1100 736 1110 746C1104 760 1086 770 1078 752ZM1114 762C1130 770 1130 790 1120 794C1100 794 1098 776 1114 762ZM1144 766C1160 766 1172 790 1162 798C1146 800 1138 784 1144 766Z" />
        <path d="M0 750C60 744 100 754 130 762M-4 760C30 762 50 764 70 766M52 840C56 790 60 770 78 760L130 762M134 768Q134 762 142 764L250 796Q258 804 250 810L140 782Q132 778 134 768ZM150 764C152 742 180 744 178 770" />
      </Block>

      <Block x={0} y={530}>
        <Dots items={[[45, 112, 10], [43, 194, 17], [76, 265, 10], [280, 89, 17], [257, 196, 10], [188, 273, 23], [763, 169, 17], [597, 232, 17], [667, 249, 10], [805, 249, 10], [610, 91, 10], [1113, 150, 10], [1153, 306, 17], [1175, 371, 10], [1044, 400, 10], [1190, 583, 23], [159, 572, 17], [97, 604, 10], [323, 569, 17], [414, 619, 17], [486, 632, 10], [244, 672, 10], [678, 635, 23], [733, 612, 10], [855, 612, 10], [262, 303, 10], [315, 376, 10], [373, 457, 17], [306, 512, 10]]} />
        <path d="M116 98L212 112Q226 118 224 132L214 196Q210 210 196 208L148 200L116 212L110 194Q90 190 92 176L102 110Q104 100 116 98ZM142 98C140 60 192 52 196 106M124 134L198 149M120 154L174 165" />
        <path d="M408 102C380 90 344 90 328 116C310 150 300 200 294 240C292 260 300 270 320 272L404 284C424 286 436 280 438 262L442 178C430 178 420 164 424 148C404 146 394 116 408 102ZM348 166L362 178L346 184M410 176L392 182L408 190M348 212C360 220 380 220 392 220M354 218C350 240 360 246 368 244C380 242 382 230 380 220M366 220V232M348 284L346 320C350 338 370 334 372 318L378 288" />
        <rect x="442" y="83" width="67" height="18" rx="9" /><rect x="522" y="83" width="67" height="18" rx="9" /><rect x="570" y="167" width="67" height="18" rx="9" /><rect x="650" y="167" width="67" height="18" rx="9" /><rect x="690" y="240" width="67" height="18" rx="9" />
        <path d="M472 160L533 180L510 188L500 216Z" />
        <path d="M630 38Q626 50 640 58L656 62C670 90 660 110 680 116L724 82Q746 76 746 62L700 20M706 92L740 124Q748 126 744 114L722 84" />
        <path d="M930 122C890 100 850 70 850 24C856-10 910-16 928 26C940-10 1000-16 1004 26C1000 70 960 100 930 122ZM852 66L776 80Q774 84 790 106C802 150 800 224 870 230M1006 38C1060 46 1080 100 1070 150L1058 178" />
        <path d="M870 230C880 190 900 156 940 154L1150 208Q1160 214 1130 236L1114 300C1100 340 1070 350 1030 348L910 312C870 296 862 260 870 230ZM944 210L1060 245M932 255L1004 279" />
        <circle cx="800" cy="379" r="87" />
        <path d="M754 398C740 390 724 382 724 364C732 352 748 356 752 364C754 344 780 344 782 362C780 380 764 390 754 398ZM826 370C810 360 790 352 792 336C800 324 816 328 820 338C820 316 846 314 852 334C852 354 838 360 826 370ZM754 408C770 450 850 456 852 376" />
        <path d="M930 402C914 394 922 372 942 376C950 350 980 352 984 372C1004 374 1004 404 982 402C970 414 960 402 958 398C950 408 940 410 930 402Z" />
        <circle cx="921" cy="479" r="22" /><circle cx="975" cy="459" r="29" />
        <path d="M934 508C910 504 890 520 892 546Q894 554 904 553L1028 544M934 548C930 520 944 496 970 494L1006 496Q1020 498 1024 506" /><Cross x={1035} y={517} a={-5} s={0.86} />
        <path d="M1146 360C1140 346 1120 356 1110 376L1086 430C1074 460 1086 496 1120 508C1160 512 1200 500 1206 474C1210 460 1200 440 1190 434M1146 360C1150 380 1130 390 1128 400C1110 412 1100 430 1110 434C1130 436 1124 412 1136 396C1156 388 1156 400 1148 412C1130 430 1120 440 1132 448C1150 452 1156 420 1166 412C1184 420 1160 440 1154 450C1156 464 1170 460 1176 440C1190 430 1188 440 1180 450L1184 472" />
        <path d="M1080 572L1122 564Q1128 566 1132 604Q1130 610 1124 612L1084 618Q1078 614 1076 580ZM1086 568C1080 546 1106 540 1108 562" />
        <Cross x={939} y={633} a={42} s={1.04} />
        <rect x="-14" y="-14" width="28" height="28" rx="3" transform="translate(1026 633) rotate(30)" />
        <path d="M1140 652H1162L1171 670L1160 686H1140L1130 670Z" />
        <path d="M0 558C20 540 0 590 48 588C40 620 10 630-20 612" />
        <rect x="-18" y="-33" width="36" height="66" rx="18" transform="translate(249 569) rotate(8)" /><path d="M215 582C216 624 268 630 274 592M240 616L236 630" />
        <path d="M-60 720C-50 680 10 660 100 636C150 626 170 650 198 720M54 660L78 720M112 662L124 702M88 692L150 678" />
        <path d="M296 720L318 634Q324 620 332 626L366 656C400 656 440 660 452 674L502 668Q510 674 504 684L484 720M324 692C340 700 360 696 376 696M340 698L336 720M362 698L356 720M402 708L418 720M434 712L472 718M384 720L390 706" />
        <path d="M662 720C670 680 700 670 730 664L790 656C810 660 820 664 828 672M758 662C770 644 800 646 804 660M714 720C720 680 770 668 798 720M734 720C744 700 764 696 778 720" /><circle cx="702" cy="702" r="11" />
        <Sparkle x={851} y={691} r={38} a={6} />
        <path d="M998 720C1000 660 1100 660 1110 720" /><circle cx="1053" cy="724" r="14" />
        <path d="M1198 690C1220 664 1240 644 1256 646L1300 676M1198 690C1230 694 1270 680 1298 676M1198 690L1214 700M1180 720L1200 700" />
        <path d="M1154 118L1100 60L1146 46M1154 136C1160 136 1210 160 1226 170M1100 60L1118 98L1154 138L1190 112L1142 50C1160 20 1180-10 1190-20M1146 56L1200 0L1240-12M1200 0M1190 112L1244 86L1256 4M1246 80L1248 118M1170 136L1232 162M1244 124C1220 140 1208 150 1210 164L1250 170" />
      </Block>

      <Block x={400} y={530}>
        <Dots items={[[614, 187, 10], [610, 269, 10], [642, 343, 17], [631, 435, 10], [379, 337, 9], [205, 296, 23], [316, 260, 10], [68, 445, 10], [131, 442, 23], [432, 488, 10], [365, 657, 10], [144, 643, 10], [461, 708, 10], [773, 48, 10]]} />
        <circle cx="216" cy="130" r="107" /><circle cx="216" cy="130" r="86" /><circle cx="216" cy="130" r="20" />
        <path d="M130 131H196M184 54L208 112M282 80L232 118M290 176L234 140M210 150L194 210M104 134L46 118M46 88L42 130C20 140 4 150 8 168L36 172M24 180Q20 190 28 196L96 212M28 180L98 192" /><circle cx="107" cy="203" r="17" />
        <path d="M348 32L366 26L374 14Q380 6 388 10L414 46Q418 56 408 62L378 88Q366 74 352 80Q338 76 348 60L358 50Q338 50 342 40Z" />
        <path d="M516 10Q512-2 524-4L544-6Q552-4 540 10L562 20L530 60Q518 64 516 52L540 28Q524 26 516 10Z" />
        <path d="M440 82Q450 66 474 74C500 84 526 100 528 118Q530 130 524 140L454 256L370 282Q366 270 360 206ZM434 92L526 144M360 206C370 196 380 206 386 222C396 210 420 208 428 244C440 236 450 240 452 258M456 106L390 216M496 130L430 240M366 260L394 276" />
        <Sparkle x={550} y={224} a={8} />
        <circle cx="720" cy="214" r="58" /><path d="M716 192L726 206L742 204L738 216L748 228L732 230L726 242L714 232L698 234L702 218L698 206L710 206Z" />
        <path d="M0 280Q-4 264 20 262L130 252Q146 252 150 266L156 298C160 320 150 328 134 330C120 332 110 330 104 322C96 340 70 344 54 330C40 346 10 344 0 330ZM0 314L156 298M48 260L54 330M96 256L104 322M10 340L18 384Q22 396 36 394L136 386Q150 384 152 372L148 328M62 342L68 390M80 342V360Q84 370 94 370L124 368Q134 364 132 354V332M30 344L36 392" />
        <path d="M212 362C176 400 184 450 218 480C260 500 300 450 316 412C280 402 240 420 218 480C250 450 250 400 212 362C204 400 210 450 216 478M316 412C280 430 250 450 224 478M208 480L226 486L220 496L206 490Z" />
        <path d="M236 366C220 350 236 334 246 340C236 324 256 314 264 322C262 306 284 304 286 314C300 304 312 324 302 332C320 334 320 350 312 356C320 370 310 380 300 380C300 400 280 410 268 404C256 410 240 400 244 390C226 390 226 374 236 366C260 366 260 390 268 404M246 340C270 340 284 360 286 400M264 322C290 324 300 350 302 380M286 314C280 340 260 380 244 390M302 332C300 350 280 380 276 404M236 360C260 350 290 360 300 380M250 334C280 332 300 346 312 356" />
        <circle cx="367" cy="414" r="20" /><path d="M380 428L396 444" />
        <circle cx="514" cy="388" r="85" /><path d="M490 328C440 350 430 420 480 446C500 456 520 454 540 446M482 364Q480 356 490 354L506 348Q514 346 518 356L538 406Q540 416 530 418Q522 418 518 408L502 370Q484 378 482 364Z" />
        <circle cx="522" cy="323" r="4" /><circle cx="558" cy="344" r="4" /><circle cx="575" cy="384" r="4" /><circle cx="562" cy="428" r="4" />
        <path d="M700 350C710 310 750 290 800 296L1016 336Q1032 340 1028 350L998 382C990 420 990 470 970 496C950 526 920 534 890 532L780 516C720 510 670 470 688 400Z" />
        <circle cx="795" cy="406" r="72" /><path d="M751 400C750 456 836 466 840 412M764 390C766 372 782 372 782 390M812 400C812 380 830 380 830 398M816 444L838 462C850 458 856 444 850 432L838 426M826 438L842 454M834 432L850 446M882 480L894 494L926 464M906 496L944 468" />
        <path d="M1022 418L1030 416Q1034 408 1044 408L1058 408Q1064 412 1066 412L1088 410Q1096 414 1096 422L1100 450Q1098 460 1090 460L1036 468Q1028 468 1026 460L1020 434Z" />
        <path d="M96 484C80 470 60 486 50 510C40 520 26 540 30 560C50 600 80 596 90 596L150 588C170 584 172 566 158 564L120 556L168 508C180 488 156 480 140 498L110 530M96 484C90 496 60 510 52 520C70 530 80 510 98 494C116 482 120 500 104 514C90 530 76 530 70 528C70 544 90 540 104 524C110 516 130 496 130 510C126 530 110 530 94 540C86 550 90 556 104 552" />
        <path d="M270 504L380 490Q396 490 400 506L404 560Q402 576 386 580L290 595Q270 596 266 580L257 526Q258 508 270 504Z" />
        <path d="M291 534V562M279 542L303 555M303 541L279 556M331 529V557M319 537L343 550M343 536L319 551M370 524V552M358 532L382 545M382 531L358 546" />
        <path d="M228 590C216 588 206 600 202 620L190 660C180 700 200 716 224 720M228 590C238 600 230 630 220 652C212 664 230 664 234 652C238 620 254 620 250 640L240 670C250 676 260 660 266 640C280 634 272 660 262 680C270 690 280 680 284 654C296 646 290 670 290 690L316 658C330 654 332 664 326 676C300 700 290 710 270 720" />
        <circle cx="493" cy="604" r="63" /><circle cx="493" cy="604" r="46" />
        <path d="M482 584L493 604L503 590M530 550L656 487L692 506Q698 512 684 552L556 616M448 556C444 536 470 530 480 542M430 598C410 600 406 616 414 630L430 662C440 674 460 672 466 664" />
        <circle cx="575" cy="567" r="12" /><circle cx="614" cy="547" r="12" /><circle cx="651" cy="527" r="12" />
        <path d="M680 588L745 632L708 638L690 666ZM784 546C756 552 746 580 756 600C776 634 826 620 828 582C800 590 776 580 784 546Z" />
        <path d="M0 688C20 664 30 644 50 646L96 676C60 680 30 690 0 688ZM66 680C90 690 116 710 124 718M528 718C526 700 540 684 558 684C560 660 580 654 592 656C610 636 650 640 660 660C680 670 676 684 672 690C690 700 690 710 690 720M592 710C590 684 616 680 630 686L632 678M630 686L620 690M638 700Q644 708 636 720" />
      </Block>

      <Block x={178} y={530}>
        <path d="M86 280L152 292L134 360L120 486L98 600L84 676L20 662L46 540L66 414ZM76 346L138 356M66 408L126 418M-140 445L-70 456L0 466L308 516L298 580L-10 528L-152 506ZM54 474L40 536M118 484L106 548M180 496L170 556M244 506L234 566M-8 464L-20 526M-74 456L-86 516M28 596L94 608" />
        <path d="M112 300L106 328Q110 336 120 330M102 314H122M78 500Q80 506 78 516Q74 526 66 520M80 492V494M192 544L194 520Q204 510 206 524L204 540M206 524Q220 510 224 524Q220 540 226 542M-118 486C-104 472-96 490-106 496C-122 500-124 484-112 480M-104 484L-100 498" />
        <path d="M-30 320L-6 290M-60 288C-40 280-20 250-8 248Q0 250 10 252C30 270 40 290 40 304L20 320" />
        <path d="M-134 388L-122 340L-90 316L-66 350C-84 364-100 376-118 388Q-140 392-134 388ZM-132 388L-110 362M-90 316L-74 296L-46 326L-66 350" />
      </Block>
    </>
  );
}

function Wallpaper() {
  return (
    <svg
      aria-hidden="true"
      className="pointer-events-none absolute inset-0 h-[770px] w-[1258px]"
      viewBox="0 0 1258 770"
      fill="none"
      stroke="#373737"
      strokeWidth="4.2"
      strokeLinecap="round"
      strokeLinejoin="round"
    >
      <defs>
        <g id="doodles">
          <Doodles />
        </g>
      </defs>
      <use href="#doodles" x="-660" />
      <use href="#doodles" />
      <use href="#doodles" x="660" />
    </svg>
  );
}

function Hand({ className, id }: { className: string; id: string }) {
  return (
    <svg viewBox="36 33 248 183" className={className} preserveAspectRatio="none" role="img" aria-label="👈">
      <defs>
        <radialGradient id={id} gradientUnits="userSpaceOnUse" cx="195" cy="128" r="120">
          <stop offset="0" stopColor="#ffdf65" />
          <stop offset="0.45" stopColor="#fecd36" />
          <stop offset="0.8" stopColor="#f8b81f" />
          <stop offset="1" stopColor="#f3b234" />
        </radialGradient>
      </defs>
      <path
        fill={`url(#${id})`}
        stroke="#d98412"
        strokeWidth="3"
        strokeLinejoin="round"
        d="M48 109L176 105Q180 104 176 94C168 82 163 72 163 56C163 44 168 37 176 37C186 38 187 50 190 60C197 80 226 98 246 117L272 115C280 116 281 140 281 158C281 180 279 201 273 201L250 199C236 206 226 212 210 213L146 213C137 213 135 205 138 196C132 191 131 184 136 177C127 171 126 166 132 159C123 153 124 140 130 134L50 133C37 132 37 110 48 109Z"
      />
      <path d="M52 114L140 111" stroke="#ffd777" strokeWidth="5" strokeLinecap="round" fill="none" opacity="0.7" />
      <path d="M52 130L136 130" stroke="#b96d0c" strokeWidth="3" strokeLinecap="round" fill="none" opacity="0.5" />
      <path d="M132 159Q140 160 146 156M136 177Q144 179 148 174M138 196Q146 197 150 192" stroke="#dd920f" strokeWidth="3" fill="none" opacity="0.6" />
    </svg>
  );
}

function Joy() {
  return (
    <svg viewBox="0 0 129 123" className="h-[41px] w-[43px]" role="img" aria-label="😂">
      <defs>
        <radialGradient id="joy-skin" cx="0.5" cy="0.42" r="0.58">
          <stop offset="0" stopColor="#ffe45c" />
          <stop offset="0.6" stopColor="#fed143" />
          <stop offset="0.85" stopColor="#fbab2d" />
          <stop offset="1" stopColor="#f08a1c" />
        </radialGradient>
        <linearGradient id="joy-shine" x1="0" y1="0" x2="0" y2="1">
          <stop offset="0" stopColor="#fff3a8" stopOpacity="0.8" />
          <stop offset="1" stopColor="#ffe45c" stopOpacity="0" />
        </linearGradient>
      </defs>
      <circle cx="64.5" cy="61.5" r="61" fill="url(#joy-skin)" />
      <ellipse cx="64.5" cy="30" rx="42" ry="25" fill="url(#joy-shine)" />
      <path d="M19 46Q27 33 42 32M87 32Q102 33 110 46" stroke="#8a5210" strokeWidth="4.5" fill="none" strokeLinecap="round" />
      <path d="M30 60Q32 45 41 45Q50 45 53 60Q42 52 30 60ZM76 60Q78 45 88 45Q97 45 99 60Q88 52 76 60Z" fill="#6e3c0c" stroke="#6e3c0c" strokeWidth="3" strokeLinejoin="round" />
      <path d="M25 72Q64 84 104 72C104 96 88 110 64 110C42 110 25 96 25 72Z" fill="#6a3410" />
      <path d="M26 72Q64 84 103 72Q102 82 96 87Q64 94 33 87Q27 82 26 72Z" fill="#fff" />
      <path d="M46 102Q64 90 83 102Q64 113 46 102Z" fill="#f27584" />
      <path d="M24 70C27 84 22 96 11 96C2 96-1 86 4 80C9 74 18 76 24 70ZM105 70C102 84 107 96 118 96C127 96 130 86 125 80C120 74 111 76 105 70Z" fill="#4fcdeb" />
      <path d="M18 80Q10 80 8 86M110 80Q118 80 121 86" stroke="#b5f0fb" strokeWidth="4" fill="none" strokeLinecap="round" />
    </svg>
  );
}

function Ticks() {
  return (
    <svg viewBox="0 0 18 12" className="ml-[9px] h-[12px] w-[18px]" fill="none" stroke="#53bdeb" strokeWidth="1.8">
      <path d="M0.6 6.6L3.9 10.2L11.4 0.9M7.4 8.3L9.4 10.3L17 0.9" />
    </svg>
  );
}

function Tail({ side }: { side: 'in' | 'out' }) {
  return side === 'out' ? (
    <svg viewBox="0 0 11 14" className="absolute -top-px left-full -ml-px h-[14px] w-[11px]">
      <path d="M0 0H10Q11 0.8 10 2L1 12.5V14H0Z" fill="#005c4b" />
      <path d="M0 0.5H10.4" stroke="#146858" />
    </svg>
  ) : (
    <svg viewBox="0 0 11 11" className="absolute -top-px right-full -mr-px h-[11px] w-[11px]">
      <path d="M11 0H1Q0 0.8 1.4 2L10 9.5V11H11Z" fill="#353535" />
      <path d="M0.6 0.5H11" stroke="#414141" />
    </svg>
  );
}

type BubbleProps = {
  side: 'in' | 'out';
  className: string;
  tail?: boolean;
  children: React.ReactNode;
};

function Bubble({ side, className, tail = true, children }: BubbleProps) {
  const tone =
    side === 'out'
      ? 'self-end bg-[#005c4b] border-t-[#146858] rounded-bl-lg rounded-br-lg rounded-tl-lg'
      : 'self-start bg-[#353535] border-t-[#414141] rounded-bl-lg rounded-br-lg';
  const corner = tail && side === 'out' ? '' : 'rounded-tr-lg';
  return (
    <div className={`relative flex shrink-0 border-t shadow-[0_1px_2px_rgba(0,0,0,0.2)] ${tone} ${corner} ${className}`}>
      {tail && <Tail side={side} />}
      {children}
    </div>
  );
}

type TextProps = {
  side: 'in' | 'out';
  text: string;
  time: string;
  className: string;
  tracking: string;
  tail?: boolean;
};

function TextMessage({ side, text, time, className, tracking, tail }: TextProps) {
  return (
    <Bubble side={side} tail={tail} className={`h-[52px] justify-between pl-3 ${className}`}>
      <p className={`pt-[8px] text-[20px] leading-[28px] whitespace-nowrap text-white ${tracking}`}>{text}</p>
      {side === 'out' ? (
        <div className="flex h-fit items-center pt-[18px] pr-[9px] text-[#7fada5]">
          <span className="text-[15px] leading-5 tracking-[-0.5px]">{time}</span>
          <Ticks />
        </div>
      ) : (
        <span className="pt-[18px] pr-[7px] text-[15px] leading-5 tracking-[-0.5px] text-[#9a9a9a]">{time}</span>
      )}
    </Bubble>
  );
}

function EmojiMessage({ time, className, children }: { time: string; className: string; children: React.ReactNode }) {
  return (
    <Bubble side="in" className={`w-[200px] flex-col justify-between ${className}`}>
      <div className="flex items-end justify-center">{children}</div>
      <span className="self-end pr-[7px] pb-[3px] text-[15px] leading-5 tracking-[-0.5px] text-[#9a9a9a]">{time}</span>
    </Bubble>
  );
}

export default function App() {
  return (
    <div className="flex h-[786px] w-[1258px] flex-col overflow-hidden bg-[#2b2b2b] font-['Noto_Sans','Open_Sans',sans-serif]">
      <main className="relative h-[770px] shrink-0 overflow-hidden">
        <Wallpaper />
        <div className="relative flex flex-col pt-[14px] pr-[38.6px] pl-[33px]">
          <TextMessage side="out" time="09:35" className="w-[745.4px]" tracking="tracking-[-0.07px]" text={'oow tanya dl, "ibu zizi mo report progress ibu bisa kapan?" gtu yah?'} />
          <TextMessage side="in" time="09:35" className="mt-[17px] w-[145.5px]" tracking="tracking-[0.2px]" text="yoyoy" />
          <TextMessage side="out" time="09:36" className="mt-[17px] w-[159.4px]" tracking="tracking-[-0.15px]" text="okey" />
          <TextMessage side="in" time="09:36" className="mt-[17px] w-[321.5px]" tracking="tracking-[-0.15px]" text="tinggal colek ke samping" />
          <TextMessage side="out" time="09:36" className="mt-[17px] w-[282.4px]" tracking="tracking-[-0.18px]" text="iiiiii takut wkwkkw" />
          <TextMessage side="out" time="09:37" className="mt-[4px] w-[297.4px]" tracking="tracking-[-0.05px]" tail={false} text="enih abis ini zizi blg" />
          <EmojiMessage time="09:37" className="mt-[18px] h-[124px] pt-[19px]">
            <Hand id="hand-large" className="h-[61px] w-[82px]" />
          </EmojiMessage>
          <TextMessage side="out" time="09:37" className="mt-[18px] w-[220.4px]" tracking="tracking-[-0.26px]" text="wkwkw kak" />
          <EmojiMessage time="09:37" className="mt-[18px] h-[82px] pt-[11px]">
            <Hand id="hand-a" className="mr-px mb-[7px] ml-[1px] h-[31px] w-[41.5px]" />
            <Hand id="hand-b" className="mb-[7px] h-[31px] w-[41.5px]" />
            <Joy />
          </EmojiMessage>
          <TextMessage side="out" time="09:38" className="mt-[18px] w-[363.4px]" tracking="tracking-[-0.1px]" tail={false} text="sabun kali ah dicolek colek" />
        </div>
        <button
          aria-label="Scroll to latest"
          className="absolute top-[679px] left-[1172px] flex h-[64px] w-[60px] items-center justify-center rounded-lg bg-[#272727] shadow-[0_2px_8px_rgba(0,0,0,0.3)]"
        >
          <svg viewBox="0 0 24 26" className="mr-[2px] mb-[1px] h-[26px] w-[24px]" fill="none" stroke="#fff" strokeWidth="1.6">
            <path d="M12 0.5V24M0.8 13L12 24.2L23.2 13" />
          </svg>
        </button>
      </main>
      <footer className="h-[16px] shrink-0 border-t-2 border-[#212121] bg-[#2b2b2b]" />
    </div>
  );
}
